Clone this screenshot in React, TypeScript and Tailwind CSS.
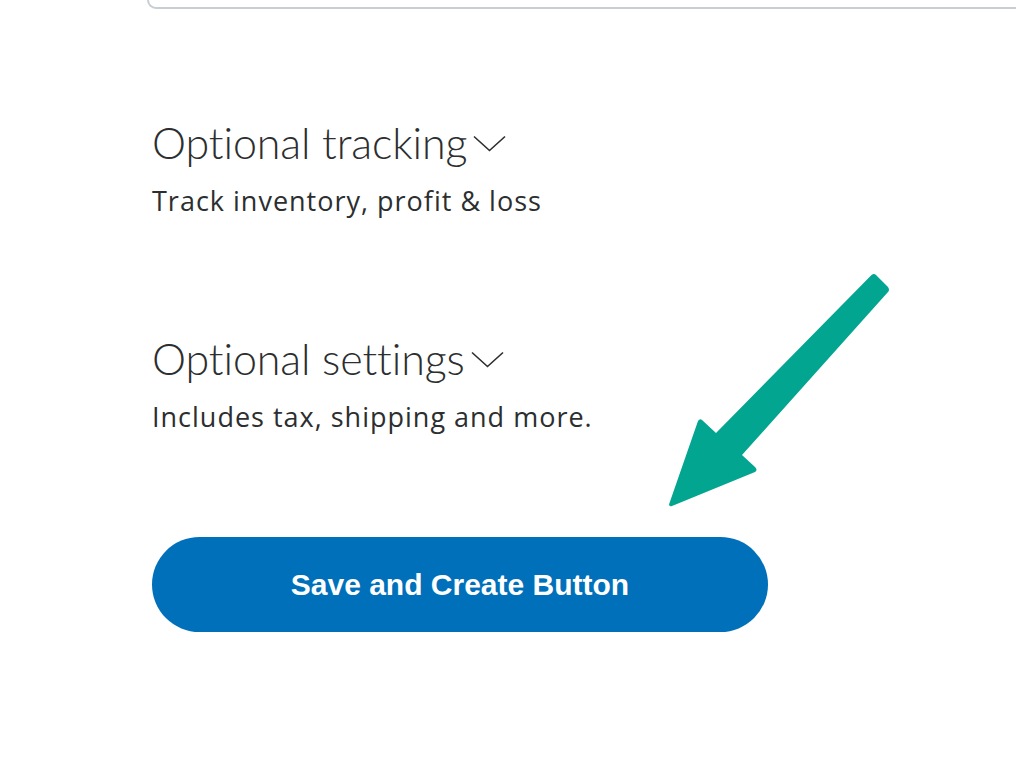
import { useState } from "react";

const sections = [
    { title: "Optional tracking", desc: "Track inventory, profit & loss" },
    { title: "Optional settings", desc: "Includes tax, shipping and more." },
];

function Chevron() {
    return (
        <svg width="33" height="17" viewBox="0 0 33 17" className="ml-[6px] shrink-0">
            <path d="M1 1.5 L16.5 15.5 L32 1.5" fill="none" stroke="#2c2e2f" strokeWidth="1.6" />
        </svg>
    );
}

function Arrow() {
    return (
        <svg width="1016" height="760" className="absolute left-0 top-0 pointer-events-none">
            <path
                d="M871.5 275 Q874 273 876 275 L888 287 Q890 290 888 292 L742 455 L755 467 Q758 470 755 472 L672 506 Q668 507 669.5 503 L698 421 Q700 418 702 420 L716 433 Z"
                fill="#02a58f"
            />
        </svg>
    );
}

export default function App() {
    const [open, setOpen] = useState<number | null>(null);

    return (
        <div className="relative w-[1016px] h-[760px] overflow-hidden bg-white text-[#2c2e2f]" style={{ fontFamily: "Lato, 'Open Sans', sans-serif" }}>
            {/* bottom edge of the card above */}
            <div className="ml-[147px] -mr-[20px] h-[9px] border-2 border-t-0 border-[#c9ced2] rounded-bl-[10px]" />

            <div className="pl-[152px] pt-[98px] flex flex-col">
                {sections.map((s, i) => (
                    <div key={s.title} className={i > 0 ? "mt-[104px]" : ""}>
                        <button
                            className="flex items-center cursor-pointer"
                            onClick={() => setOpen(open === i ? null : i)}
                        >
                            <span className="text-[43px] font-light leading-[72px] tracking-[-0.1px]">{s.title}</span>
                            <Chevron />
                        </button>
                        <p
                            className="text-[27px] leading-[36px] mt-[4px] tracking-[1px]"
                            style={{ fontFamily: "'Open Sans', Lato, sans-serif" }}
                        >
                            {s.desc}
                        </p>
                    </div>
                ))}

                <button
                    className="mt-[102px] w-[616px] h-[95px] rounded-full bg-[#0070ba] text-white text-[30px] font-bold"
                    style={{ fontFamily: "'Liberation Sans', Arial, sans-serif" }}
                >
                    Save and Create Button
                </button>
            </div>

            <Arrow />
        </div>
    );
}
